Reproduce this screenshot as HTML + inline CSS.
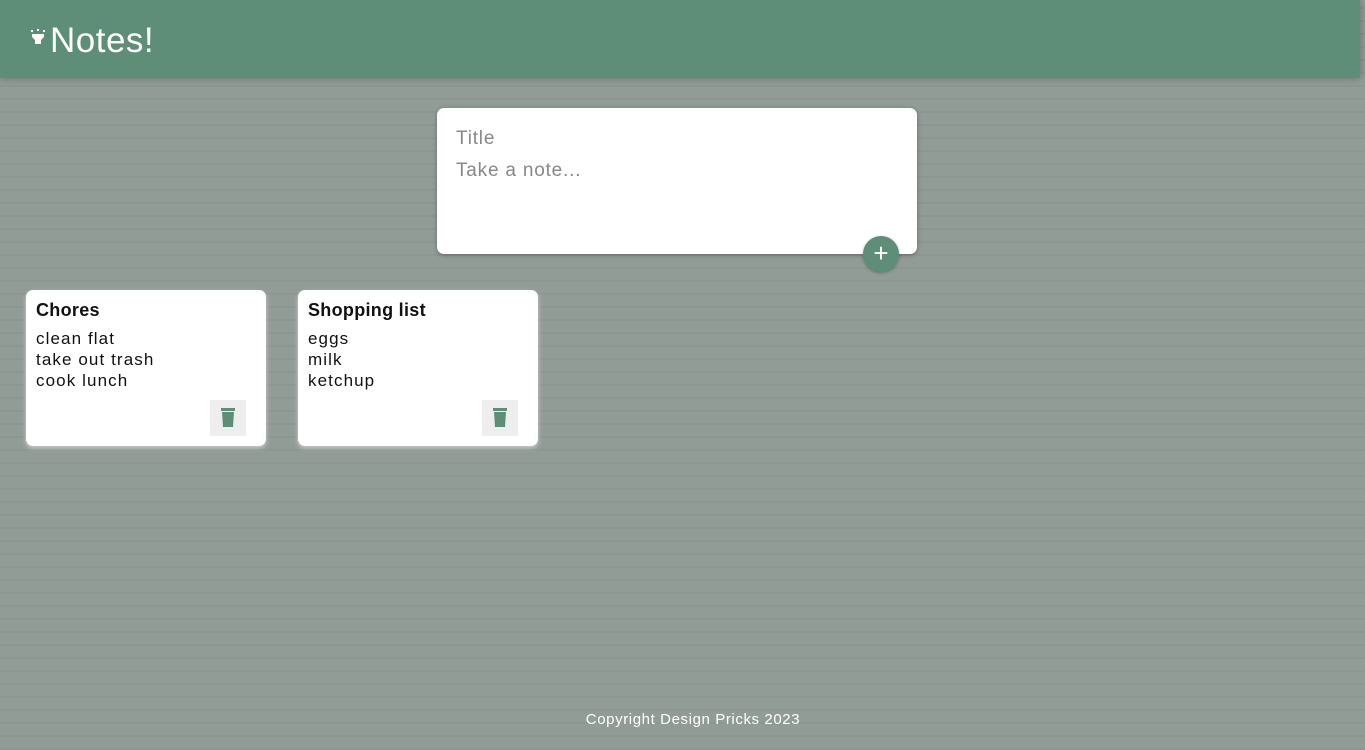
<!DOCTYPE html>
<html><head><style>
html,body{margin:0;padding:0;width:1365px;height:750px;overflow:hidden;}
body{background:#929c97;font-family:"Liberation Sans",sans-serif;position:relative;
background-image:repeating-linear-gradient(0deg,rgba(0,0,0,0.035) 0 2px,transparent 2px 13px);}
header{position:absolute;left:0;top:0;width:1360px;height:78px;background:#5f8e78;box-shadow:0 0 8px rgba(0,0,0,.3);}
header h1{margin:0;position:absolute;left:50px;top:21px;color:#fff;font-weight:normal;font-size:35px;line-height:40px;letter-spacing:0.5px;}
.bulb{position:absolute;left:30px;top:29px;}
.create{position:absolute;left:437px;top:108px;width:480px;height:146px;background:#fff;border-radius:7px;box-shadow:0 1px 5px rgba(0,0,0,.3);}
.create div{position:absolute;left:19px;color:#888;font-size:19px;letter-spacing:0.8px;}
.add{position:absolute;left:863px;top:236px;width:36px;height:36px;border-radius:50%;background:#5f8e78;box-shadow:0 1px 3px rgba(0,0,0,.3);color:#fff;font-size:26px;text-align:center;line-height:35px;}
.note{position:absolute;top:290px;width:240px;height:156px;background:#fff;border-radius:7px;box-shadow:0 2px 5px #ccc;}
.note h2{margin:0;position:absolute;left:10px;top:10px;font-size:18px;font-weight:bold;color:#111;letter-spacing:0.3px;}
.note p{margin:0;position:absolute;left:10px;top:38px;font-size:17px;line-height:21px;color:#111;letter-spacing:1.1px;}
.del{position:absolute;left:184px;top:110px;width:36px;height:36px;background:#eee;}
footer{position:absolute;top:711px;left:0;width:1386px;text-align:center;color:#fff;font-size:15px;letter-spacing:0.6px;}
</style></head><body>
<header>
<svg class="bulb" width="16" height="20" viewBox="0 0 16 20"><rect x="1" y="1" width="2" height="2" fill="#fff"/><rect x="7" y="0" width="2" height="2" fill="#fff"/><rect x="13" y="1" width="2" height="2" fill="#fff"/><path d="M2 5h12v3l-3 3v4H5v-4L2 8z" fill="#fff"/></svg>
<h1>Notes!</h1>
</header>
<div class="create"><div style="top:20px">Title</div><div style="top:52px">Take a note...</div></div>
<div class="add">+</div>
<div class="note" style="left:26px"><h2>Chores</h2><p>clean flat<br>take out trash<br>cook lunch</p>
<div class="del"><svg width="36" height="36"><rect x="11" y="8" width="14" height="3" fill="#5f8e78"/><path d="M12 12h12l-1 15h-10z" fill="#5f8e78"/></svg></div></div>
<div class="note" style="left:298px"><h2>Shopping list</h2><p>eggs<br>milk<br>ketchup</p>
<div class="del"><svg width="36" height="36"><rect x="11" y="8" width="14" height="3" fill="#5f8e78"/><path d="M12 12h12l-1 15h-10z" fill="#5f8e78"/></svg></div></div>
<footer>Copyright Design Pricks 2023</footer>
</body></html>
